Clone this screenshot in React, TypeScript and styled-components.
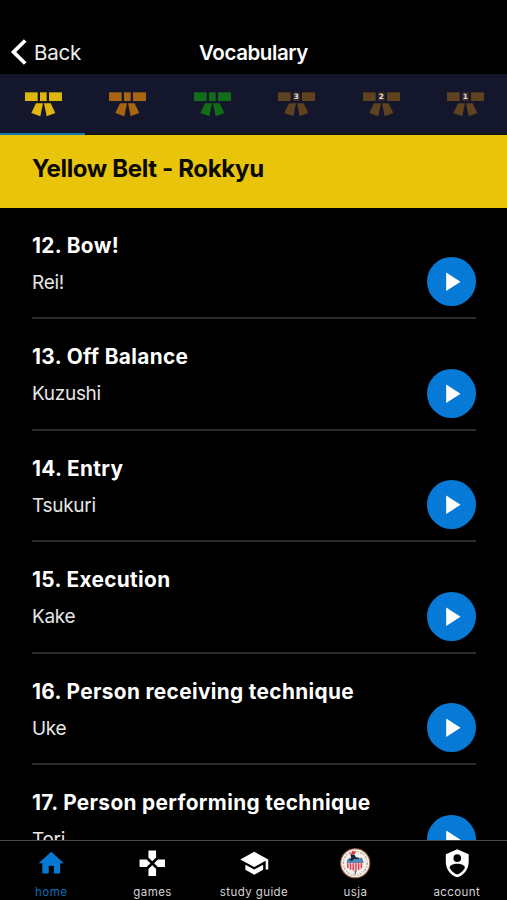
import React from "react";
import styled, { createGlobalStyle } from "styled-components";
import { MdGames, MdHome, MdSchool } from "react-icons/md";

const Global = createGlobalStyle`
  * { box-sizing: border-box; }
  html, body { margin: 0; background: #000; overflow: hidden; }
  body { font-family: Inter, "Liberation Sans", sans-serif; color: #fff; }
  button { font: inherit; color: inherit; border: 0; padding: 0; background: none; }
`;

const Screen = styled.div`
  height: 900px;
  width: 507px;
  display: flex;
  flex-direction: column;
  overflow: hidden;
  background: #000;
`;

const Header = styled.header`
  flex: none;
  height: 74px;
  padding: 30px 10px 0;
  display: grid;
  grid-template-columns: 1fr auto 1fr;
  align-items: center;
`;

const BackButton = styled.button`
  display: flex;
  align-items: center;
  gap: 6px;
  font-size: 20.5px;
  letter-spacing: -0.2px;
  color: #ededed;
`;

const Title = styled.h1`
  margin: 0;
  font-size: 20.5px;
  font-weight: 600;
  letter-spacing: -0.42px;
`;

const Tabs = styled.nav`
  flex: none;
  height: 61px;
  display: grid;
  grid-template-columns: repeat(6, 1fr);
  background: #14162b;
`;

const Tab = styled.button<{ $active?: boolean }>`
  padding: 2px 0 0 2px;
  display: flex;
  align-items: center;
  justify-content: center;
  border-bottom: 2px solid ${(p) => (p.$active ? "#1679ac" : "#15130f")};
`;

const Banner = styled.h2`
  flex: none;
  margin: 0;
  height: 72.5px;
  padding: 19px 32px 0;
  font-size: 24px;
  line-height: 29px;
  font-weight: 700;
  letter-spacing: -0.35px;
  color: #0b0900;
  background: #e8c40a;
`;

const List = styled.main`
  flex: 1;
  min-height: 0;
  padding: 0 31px 0 32px;
  overflow: hidden;
`;

const Row = styled.article`
  height: 111.6px;
  display: flex;
  justify-content: space-between;
  border-bottom: 2px solid #2b2b2b;
`;

const Words = styled.div`
  padding-top: 25px;
`;

const Term = styled.h3`
  margin: 0;
  font-size: 20.8px;
  line-height: 26px;
  font-weight: 700;
  letter-spacing: 0.36px;
`;

const Reading = styled.p`
  margin: 12px 0 0;
  font-size: 19px;
  line-height: 24px;
  letter-spacing: -0.3px;
  color: #e6e6e6;
`;

const Play = styled.button`
  flex: none;
  width: 49px;
  height: 49px;
  margin-top: 49.5px;
  border-radius: 50%;
  background: #067ad6;
  svg { display: block; }
`;

const BottomBar = styled.footer`
  flex: none;
  height: 60px;
  border-top: 1px solid #4a4a4a;
  display: grid;
  grid-template-columns: repeat(5, 1fr);
`;

const NavItem = styled.button<{ $active?: boolean }>`
  display: flex;
  flex-direction: column;
  align-items: center;
  padding: 7px 0 0 1px;
  color: ${(p) => (p.$active ? "#0879d3" : "#fff")};
  svg { flex: none; display: block; }
`;

const NavLabel = styled.span<{ $active?: boolean }>`
  margin-top: 6.5px;
  font-size: 11.5px;
  line-height: 15px;
  letter-spacing: 0.42px;
  white-space: nowrap;
  color: ${(p) => (p.$active ? "#0870b8" : "#d4d4d4")};
`;

const RankText = styled.text`
  font: 700 22px "DejaVu Sans", sans-serif;
  fill: #e8e3dc;
  text-anchor: middle;
`;

function Belt({ color, rank }: { color: string; rank?: string }) {
  return (
    <svg width="37" height="25" viewBox="0 0 111 75" fill={color}>
      <rect x="0" y="1" width="38" height="26" />
      <rect x="45" y="1" width="20" height="26" fillOpacity={rank ? 0.55 : 1} />
      <rect x="72" y="1" width="39" height="26" />
      <path d="M33 34H54L46 73L19 63Z" />
      <path d="M57 34H77L91 63L65 73Z" />
      {rank && <RankText x="55" y="22">{rank}</RankText>}
    </svg>
  );
}

function Seal() {
  return (
    <svg width="30.5" height="30.5" viewBox="0 0 90 90">
      <circle cx="45" cy="45" r="43" fill="#f5efe8" stroke="#9c6547" strokeWidth="3" />
      <circle cx="45" cy="45" r="35" fill="none" stroke="#a39b96" strokeWidth="4" strokeDasharray="5 4 3 6" />
      <circle cx="45" cy="45" r="29" fill="#f8f3ee" />
      <path d="M20 44Q19 32 29 29Q38 33 45 27Q53 33 64 28Q71 38 69 46Z" fill="#5987b4" />
      <path d="M19 44H70Q69 62 58 65Q49 66 45 73Q40 66 30 64Q20 60 19 44Z" fill="#f5cfd0" />
      <path d="M23 45V59M31 45V64M39 45V66M47 45V69M55 45V64M63 45V60" stroke="#db3f50" strokeWidth="4" />
      <path d="M27 17L36 14L35 9L46 10L44 18L35 21Z" fill="#e33237" />
      <path d="M31 20L43 20L47 27L57 29L54 33L42 32L35 38L27 36L33 30Z" fill="#17283e" />
      <path d="M45 67V77" stroke="#454047" strokeWidth="3" />
    </svg>
  );
}

function ShieldAccount() {
  return (
    <svg width="30.5" height="30.5" viewBox="0 0 24 24" fill="currentColor">
      <path d="M12,1L3,5V11C3,16.55 6.84,21.74 12,23C17.16,21.74 21,16.55 21,11V5L12,1M12,5A3,3 0 0,1 15,8A3,3 0 0,1 12,11A3,3 0 0,1 9,8A3,3 0 0,1 12,5M17.13,17C15.92,18.85 14.11,20.24 12,20.92C9.89,20.24 8.08,18.85 6.87,17C6.53,16.5 6.24,16 6,15.47C6,13.82 8.71,12.47 12,12.47C15.29,12.47 18,13.79 18,15.47C17.76,16 17.47,16.5 17.13,17Z" />
    </svg>
  );
}

const belts = [
  { color: "#dfb70c" },
  { color: "#a9640f" },
  { color: "#126d18" },
  { color: "#5f421f", rank: "3" },
  { color: "#5f421f", rank: "2" },
  { color: "#5f421f", rank: "1" },
];

const terms = [
  ["12. Bow!", "Rei!"],
  ["13. Off Balance", "Kuzushi"],
  ["14. Entry", "Tsukuri"],
  ["15. Execution", "Kake"],
  ["16. Person receiving technique", "Uke"],
  ["17. Person performing technique", "Tori"],
];

const navItems = [
  { label: "home", icon: <MdHome size={30.5} />, active: true },
  { label: "games", icon: <MdGames size={30.5} /> },
  { label: "study guide", icon: <MdSchool size={30.5} /> },
  { label: "usja", icon: <Seal /> },
  { label: "account", icon: <ShieldAccount /> },
];

export default function App() {
  return (
    <Screen>
      <Global />
      <Header>
        <BackButton>
          <svg width="18" height="28" viewBox="0 0 18 28" fill="none" stroke="#fff" strokeWidth="3.8">
            <path d="M15.2 2.5L3.6 14L15.2 25.5" />
          </svg>
          Back
        </BackButton>
        <Title>Vocabulary</Title>
      </Header>
      <Tabs>
        {belts.map((belt, i) => (
          <Tab key={i} $active={i === 0}>
            <Belt {...belt} />
          </Tab>
        ))}
      </Tabs>
      <Banner>Yellow Belt - Rokkyu</Banner>
      <List>
        {terms.map(([term, reading]) => (
          <Row key={term}>
            <Words>
              <Term>{term}</Term>
              <Reading>{reading}</Reading>
            </Words>
            <Play aria-label={`Play ${reading}`}>
              <svg width="49" height="49" viewBox="0 0 49 49">
                <path d="M19.2 15.5V34L33.5 24.8Z" fill="#fff" />
              </svg>
            </Play>
          </Row>
        ))}
      </List>
      <BottomBar>
        {navItems.map(({ label, icon, active }) => (
          <NavItem key={label} $active={active}>
            {icon}
            <NavLabel $active={active}>{label}</NavLabel>
          </NavItem>
        ))}
      </BottomBar>
    </Screen>
  );
}
